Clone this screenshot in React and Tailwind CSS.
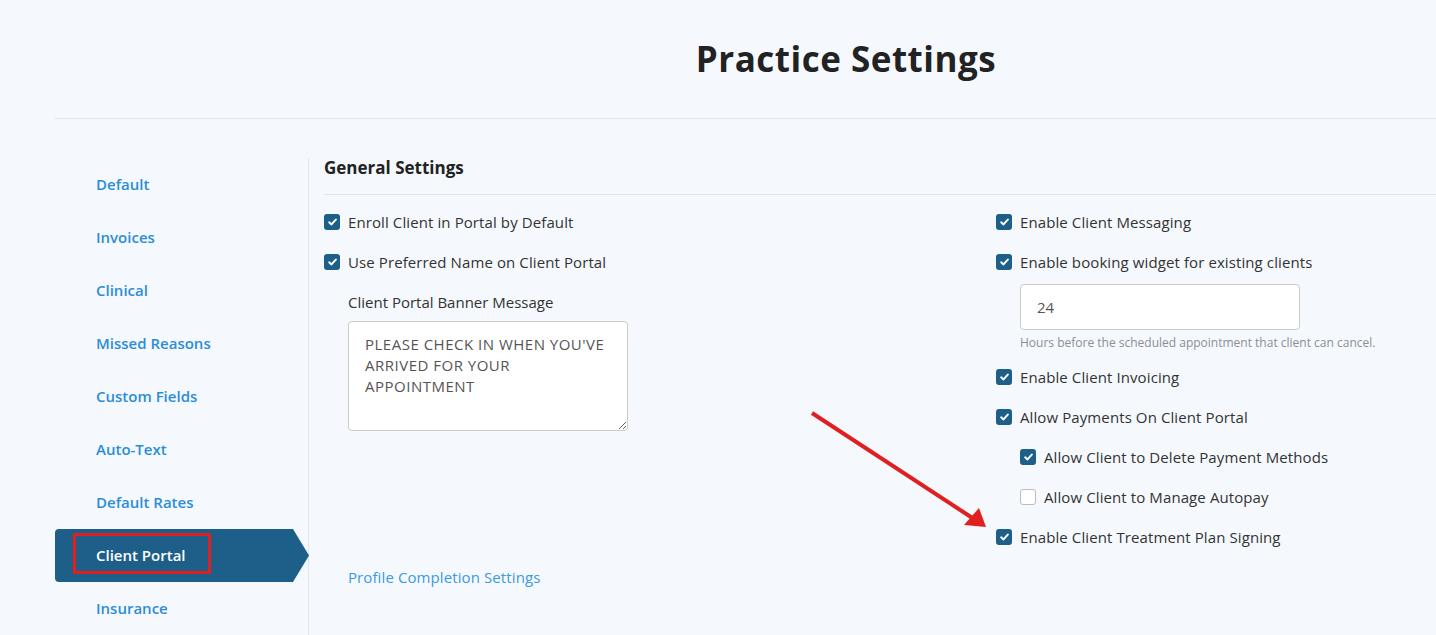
import React from "react";

const navItems = [
  "Default",
  "Invoices",
  "Clinical",
  "Missed Reasons",
  "Custom Fields",
  "Auto-Text",
  "Default Rates",
  "Client Portal",
  "Insurance",
];

function Check({ checked = true }) {
  if (!checked) {
    return <span className="w-4 h-4 shrink-0 rounded-[3px] border border-[#b9bcc0] bg-white" />;
  }
  return (
    <span className="w-4 h-4 shrink-0 rounded-[3px] bg-[#1d5f89] flex items-center justify-center">
      <svg width="9" height="8" viewBox="0 0 9 8">
        <path d="M1.2 4.3 L3.5 6.4 L7.8 1.6" fill="none" stroke="white" strokeWidth="2" strokeLinecap="round" strokeLinejoin="round" />
      </svg>
    </span>
  );
}

function Row({ label, checked = true, indent = false }) {
  return (
    <div className={"h-10 flex items-center gap-2 " + (indent ? "pl-6" : "")}>
      <Check checked={checked} />
      <span className="text-[15px] tracking-[0.1px] text-[#333]">{label}</span>
    </div>
  );
}

export default function App() {
  return (
    <div className="relative min-h-[635px] w-full overflow-hidden bg-[#f5f9fd] font-['Open_Sans',sans-serif]">
      <div className="h-[118px] pl-[256px] flex items-center justify-center">
        <h1 className="text-[35px] font-bold text-[#222] tracking-[0.5px]">Practice Settings</h1>
      </div>
      <div className="ml-[55px] border-t border-[#e1e5ea]" />

      <div className="flex pt-[39px]">
        <nav className="w-[254px] ml-[55px] border-r border-[#e1e5ea] shrink-0">
          {navItems.map((item) =>
            item === "Client Portal" ? (
              <div key={item} className="relative h-[53px] mr-[-1px]">
                <div className="h-full bg-[#1d5f89] rounded-l-[4px] [clip-path:polygon(0_0,calc(100%-16px)_0,100%_50%,calc(100%-16px)_100%,0_100%)] flex items-center pl-[41px]">
                  <span className="text-[15px] font-semibold text-white">{item}</span>
                </div>
                <div className="absolute left-[18px] top-[4px] w-[138px] h-[41px] border-[3px] border-[#e02020]" />
              </div>
            ) : (
              <div key={item} className="h-[53px] flex items-center pl-[41px]">
                <span className="text-[15px] font-semibold text-[#2b8dd8]">{item}</span>
              </div>
            )
          )}
        </nav>

        <main className="pl-[15px] w-[1128px] shrink-0">
          <div className="h-[37px] border-b border-[#e1e5ea]">
            <h2 className="text-[17px] leading-5 font-bold text-[#222]">General Settings</h2>
          </div>
          <div className="pt-[7px] flex">
            <div className="w-[672px]">
              <Row label="Enroll Client in Portal by Default" />
              <Row label="Use Preferred Name on Client Portal" />
              <div className="pl-6">
                <div className="mt-[10px] text-[15px] leading-5 text-[#333]">Client Portal Banner Message</div>
                <textarea
                  className="mt-[9px] w-[280px] h-[110px] bg-white border border-[#c9cbce] rounded-[4px] pt-[12px] px-4 text-[15px] tracking-[0.5px] leading-[21px] text-[#555] resize-y outline-none"
                  defaultValue={"PLEASE CHECK IN WHEN YOU'VE ARRIVED FOR YOUR APPOINTMENT"}
                />
              </div>
            </div>
            <div className="flex-1">
              <Row label="Enable Client Messaging" />
              <Row label="Enable booking widget for existing clients" />
              <div className="pl-6">
                <input
                  className="mt-[2px] w-[280px] h-[46px] bg-white border border-[#c9cbce] rounded-[4px] px-4 text-[15px] text-[#555] outline-none"
                  defaultValue="24"
                />
                <div className="mt-[6px] text-[12px] leading-[14px] text-[#8a8f95]">
                  Hours before the scheduled appointment that client can cancel.
                </div>
              </div>
              <div className="mt-[7px]">
                <Row label="Enable Client Invoicing" />
                <Row label="Allow Payments On Client Portal" />
                <Row label="Allow Client to Delete Payment Methods" indent />
                <Row label="Allow Client to Manage Autopay" indent checked={false} />
                <Row label="Enable Client Treatment Plan Signing" />
              </div>
            </div>
          </div>
          <div className="h-10 flex items-center pl-6">
            <span className="text-[15px] tracking-[0.1px] text-[#3b9ae0]">Profile Completion Settings</span>
          </div>
        </main>
      </div>

      <svg className="absolute left-0 top-0 pointer-events-none" width="1436" height="635">
        <line x1="812" y1="413" x2="974" y2="519" stroke="#e02020" strokeWidth="4" />
        <polygon points="986,527 979,508 964,525" fill="#e02020" />
      </svg>
    </div>
  );
}
